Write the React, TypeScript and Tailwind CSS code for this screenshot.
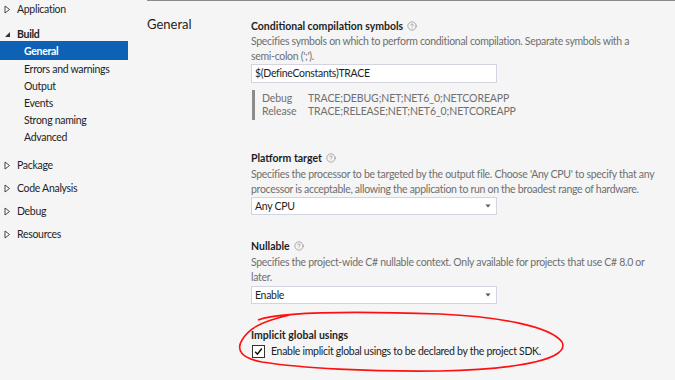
import { CircleHelp } from "lucide-react";

const font = { fontFamily: 'Lato, "Open Sans", sans-serif' };

const Collapsed = () => (
    <svg width="7" height="9" viewBox="0 0 7 9" className="shrink-0">
        <path d="M1 1 L5.5 4.5 L1 8 Z" fill="#fff" stroke="#444" strokeWidth="1" />
    </svg>
);

const Expanded = () => (
    <svg width="7" height="9" viewBox="0 0 7 9" className="shrink-0">
        <path d="M6 2 L6 7 L1 7 Z" fill="#333" />
    </svg>
);

const Help = () => <CircleHelp size={10} strokeWidth={1.3} className="text-[#6d6d6d] ml-[4px]" />;

const Caret = () => (
    <svg width="6" height="4" viewBox="0 0 6 4">
        <path d="M0.5 0.5 L5.5 0.5 L3 3.5 Z" fill="#555" />
    </svg>
);

const Group = ({ label }: { label: string }) => (
    <div className="flex items-center gap-[6px] pl-[4px] pt-[3px] h-[23px] text-[#1e1e1e]">
        <Collapsed />
        <span>{label}</span>
    </div>
);

const Select = ({ value }: { value: string }) => (
    <div className="w-[246px] h-[18px] bg-white border border-[#d4d4e0] flex items-center justify-between pl-[3px] pr-[5px] text-[#1e1e1e]">
        <span>{value}</span>
        <Caret />
    </div>
);

const Title = ({ text }: { text: string }) => (
    <div className="flex items-center font-bold text-[#1e1e1e] h-[16px] tracking-normal">
        {text}
        <Help />
    </div>
);

const App = () => {
    return (
        <div className="relative w-[675px] h-[380px] bg-[#f5f5f5] overflow-hidden text-[10.5px] leading-[15px] tracking-[-0.3px]" style={font}>
            <div className="flex">
                {/* left tree */}
                <div className="w-[147px] shrink-0">
                    <div className="flex items-center gap-[6px] pl-[4px] h-[18px] text-[#1e1e1e]">
                        <Collapsed />
                        <span>Application</span>
                    </div>
                    <div className="flex items-center gap-[6px] pl-[4px] pt-[3px] h-[17px] font-bold text-[#1e1e1e] mt-[6px]">
                        <Expanded />
                        <span>Build</span>
                    </div>
                    <div className="w-[128px] h-[19px] bg-[#0e62b5] text-white font-bold pl-[24px] pt-[2px] flex items-center">General</div>
                    {["Errors and warnings", "Output", "Events", "Strong naming", "Advanced"].map((t) => (
                        <div key={t} className="h-[17px] pl-[24px] pt-[2px] flex items-center text-[#1e1e1e]">{t}</div>
                    ))}
                    <div className="h-[7px]" />
                    <Group label="Package" />
                    <Group label="Code Analysis" />
                    <Group label="Debug" />
                    <Group label="Resources" />
                </div>

                {/* right side */}
                <div className="flex-1 border-t border-[#8a8a8a] flex">
                    <div className="w-[104px] shrink-0 pt-[14px] text-[13px] leading-[18px] tracking-normal text-[#1e1e1e]">General</div>
                    <div className="pt-[17px] w-[420px]">
                        <Title text="Conditional compilation symbols" />
                        <div className="text-[#6f6f6f] whitespace-nowrap">
                            Specifies symbols on which to perform conditional compilation. Separate symbols with a
                            <br />
                            semi-colon (';').
                        </div>
                        <div className="w-[246px] h-[19px] bg-white border border-[#d4d4e0] flex items-center pl-[3px] text-[#1e1e1e]">
                            $(DefineConstants)TRACE
                        </div>
                        <div className="mt-[7px] ml-[1px] border-l-[3px] border-[#8c8c8c] pl-[7px] h-[30px] flex flex-col justify-center leading-[13px] text-[#707070] whitespace-nowrap tracking-[-0.1px]">
                            <div className="flex"><span className="w-[46px]">Debug</span><span>TRACE;DEBUG;NET;NET6_0;NETCOREAPP</span></div>
                            <div className="flex"><span className="w-[46px]">Release</span><span>TRACE;RELEASE;NET;NET6_0;NETCOREAPP</span></div>
                        </div>

                        <div className="mt-[30px]">
                            <Title text="Platform target" />
                            <div className="text-[#6f6f6f] mt-[1px] whitespace-nowrap">
                                Specifies the processor to be targeted by the output file. Choose 'Any CPU' to specify that any
                                <br />
                                processor is acceptable, allowing the application to run on the broadest range of hardware.
                            </div>
                            <Select value="Any CPU" />
                        </div>

                        <div className="mt-[23px]">
                            <Title text="Nullable" />
                            <div className="text-[#6f6f6f] mt-[1px] whitespace-nowrap">
                                Specifies the project-wide C# nullable context. Only available for projects that use C# 8.0 or
                                <br />
                                later.
                            </div>
                            <div className="mt-[1px]"><Select value="Enable" /></div>
                        </div>

                        <div className="mt-[23px]">
                            <div className="font-bold text-[#1e1e1e] h-[16px] flex items-center tracking-normal">Implicit global usings</div>
                            <div className="flex items-center gap-[6px] mt-[1px] h-[14px] text-[#1e1e1e]">
                                <div className="w-[13px] h-[13px] bg-white border border-[#333] flex items-center justify-center ml-[1px]">
                                    <svg width="9" height="9" viewBox="0 0 9 9">
                                        <path d="M1.2 4.8 L3.4 7.2 L7.8 1.5" fill="none" stroke="#111" strokeWidth="1.5" />
                                    </svg>
                                </div>
                                <span>Enable implicit global usings to be declared by the project SDK.</span>
                            </div>
                        </div>
                    </div>
                </div>
            </div>

            {/* red hand-drawn circle */}
            <svg className="absolute left-0 top-0 pointer-events-none" width="675" height="380">
                <path
                    d="M258 320 C 285 310, 380 312, 440 314 C 500 317, 550 326, 562 342 C 570 358, 525 369, 440 371 C 370 372, 300 368, 262 362 C 241 358, 236 350, 242 340 C 248 330, 258 322, 290 315"
                    fill="none"
                    stroke="#ff1010"
                    strokeWidth="1.6"
                />
            </svg>
        </div>
    );
};

export default App;
